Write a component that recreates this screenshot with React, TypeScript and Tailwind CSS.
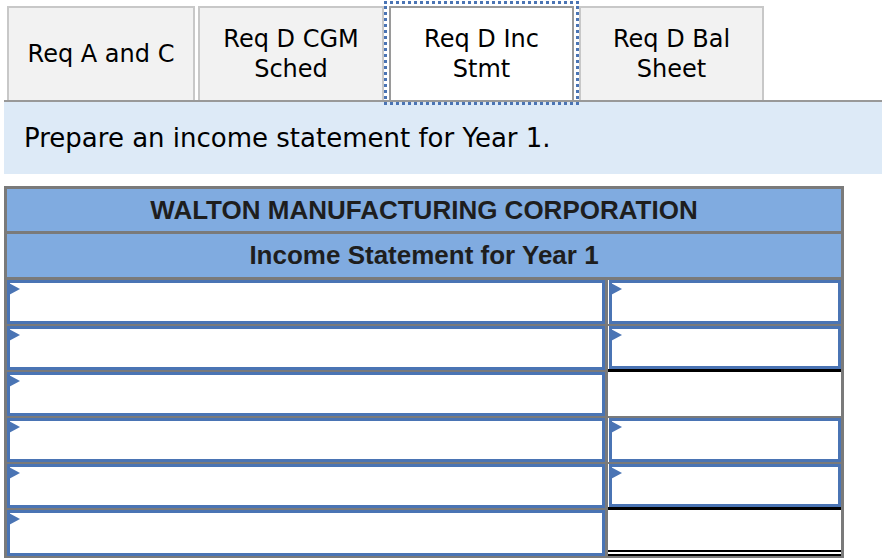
const tabs = [
  { label: ['Req A and C'], active: false, cls: 'ml-[3px] w-[188px]' },
  { label: ['Req D CGM', 'Sched'], active: false, cls: 'ml-[3px] w-[186px]' },
  { label: ['Req D Inc', 'Stmt'], active: true, cls: 'ml-[5px] w-[185px]' },
  { label: ['Req D Bal', 'Sheet'], active: false, cls: 'ml-[5px] w-[185px]' },
];

// right column: 'input' | 'total' | 'grand'
const rows = ['input', 'input', 'total', 'input', 'input', 'grand'];

function Flag() {
  return (
    <svg className="absolute left-[-3px] top-[-1px] h-[14px] w-[13px]" viewBox="0 0 13 14">
      <polygon points="0,0 13,7 0,14" fill="#4a74b4" />
    </svg>
  );
}

function InputBox() {
  return (
    <div className="relative h-full w-full border-[3px] border-[#4a74b4] bg-white">
      <Flag />
    </div>
  );
}

export default function App() {
  return (
    <div className="h-[558px] w-[882px] overflow-hidden bg-white font-['DejaVu_Sans',Verdana,sans-serif] text-black">
      <div className="ml-[4px]">
        <div className="flex h-[102px] items-end border-b-2 border-[#999999] pt-[6px]">
          {tabs.map((t, i) => (
            <div
              key={i}
              className={
                'flex h-[94px] flex-col items-center justify-center border-2 border-b-0 text-[24px] leading-[30px] ' +
                t.cls +
                (t.active
                  ? ' border-[#9a9a9a] bg-white outline-[3px] outline-offset-[2px] outline-dotted outline-[#4a74b4]'
                  : ' border-[#c8c8c8] bg-[#f2f2f2]')
              }
            >
              {t.label.map((l) => (
                <span key={l}>{l}</span>
              ))}
            </div>
          ))}
        </div>
        <div className="flex h-[72px] items-center bg-[#ddeaf7] pl-[20px] text-[26px]">
          Prepare an income statement for Year 1.
        </div>
      </div>

      <div className="ml-[4px] mt-[12px] w-[840px] border-[3px] border-[#7a7a7a] font-['Liberation_Sans',Arial,sans-serif]">
        <div className="flex h-[45px] items-center justify-center border-b-[3px] border-[#7a7a7a] bg-[#80abe0] text-[26px] font-bold text-[#1e1e1e]">
          WALTON MANUFACTURING CORPORATION
        </div>
        <div className="flex h-[46px] items-center justify-center border-b-[3px] border-[#7a7a7a] bg-[#80abe0] text-[26px] font-bold text-[#1e1e1e]">
          Income Statement for Year 1
        </div>
        {rows.map((kind, i) => {
          const last = i === rows.length - 1;
          const next = rows[i + 1];
          let rightBorder = last ? 'border-b-[6px] border-double border-black' : 'border-b-2 border-[#7a7a7a]';
          if (next === 'total' || next === 'grand') rightBorder = 'border-b-[3px] border-black';
          return (
            <div key={i} className="flex h-[46px]">
              <div
                className={
                  'h-full w-[601px] border-r-[3px] border-[#7a7a7a] ' + (last ? '' : 'border-b-2')
                }
              >
                <InputBox />
              </div>
              <div className={'h-full flex-1 pl-px ' + rightBorder}>
                {kind === 'input' ? <InputBox /> : null}
              </div>
            </div>
          );
        })}
      </div>
    </div>
  );
}
